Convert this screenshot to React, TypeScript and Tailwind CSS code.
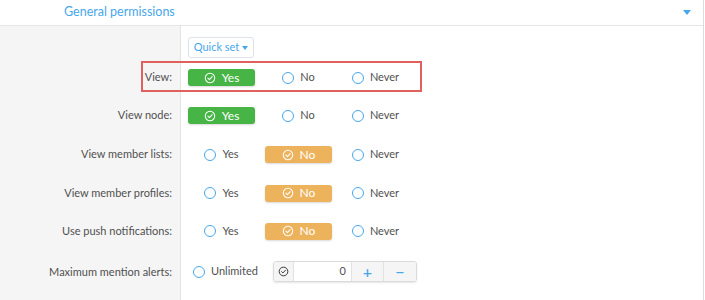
import React from 'react';

type Choice = 'yes' | 'no' | 'never';

interface PermRow {
  label: string;
  value: Choice;
  height: string;
}

const rows: PermRow[] = [
  { label: 'View node:', value: 'yes', height: 'h-[39px]' },
  { label: 'View member lists:', value: 'no', height: 'h-[39px]' },
  { label: 'View member profiles:', value: 'no', height: 'h-[38px]' },
  { label: 'Use push notifications:', value: 'no', height: 'h-[38px]' },
];

const CheckCircle = ({ className = '' }: { className?: string }) => (
  <svg viewBox="0 0 16 16" className={className} fill="none" stroke="currentColor" strokeWidth="1.4">
    <circle cx="8" cy="8" r="6.3" />
    <path d="M5.2 8.2 L7.2 10.1 L10.9 6.1" strokeLinecap="round" strokeLinejoin="round" />
  </svg>
);

const Radio = ({ text }: { text: string }) => (
  <div className="flex items-center gap-[6px] text-[#505050]">
    <span className="w-[12px] h-[12px] rounded-full border-[1.5px] border-[#47a7eb] bg-white" />
    <span>{text}</span>
  </div>
);

const Option = ({ text, active, kind }: { text: string; active: boolean; kind: Choice }) => {
  if (!active) {
    return (
      <div className="w-[67px] flex justify-center">
        <Radio text={text} />
      </div>
    );
  }
  const bg = kind === 'yes' ? 'bg-[#46b546]' : 'bg-[#edb35c]';
  return (
    <div
      className={`w-[67px] h-[17px] rounded-[3px] ${bg} text-white text-[12px] flex items-center justify-center gap-[6px] shadow-[0_1px_2px_rgba(0,0,0,0.15)]`}
    >
      <CheckCircle className="w-[12px] h-[12px]" />
      <span>{text}</span>
    </div>
  );
};

const Choices = ({ value }: { value: Choice }) => (
  <div className="flex items-center gap-[10px] pl-[7px]">
    <Option text="Yes" kind="yes" active={value === 'yes'} />
    <Option text="No" kind="no" active={value === 'no'} />
    <Option text="Never" kind="never" active={value === 'never'} />
  </div>
);

const Label = ({ children }: { children?: React.ReactNode }) => (
  <div className="w-[181px] shrink-0 self-stretch bg-[#f5f5f5] border-r border-[#e4e4e4] flex items-center justify-end pr-[8px] text-[#505050]">
    {children}
  </div>
);

export default function App() {
  return (
    <div
      className="w-[705px] h-[300px] bg-white overflow-hidden text-[11px]"
      style={{ fontFamily: '"Segoe UI", Lato, "Noto Sans", sans-serif' }}
    >
      <div className="w-[704px] h-full border-r border-[#dcdcdc] flex flex-col">
        {/* header */}
        <div className="h-[26px] shrink-0 border-b border-[#e6e6e6] flex items-center justify-between pl-[64px] pr-[12px]">
          <span className="text-[12.5px] text-[#47a7eb]">General permissions</span>
          <span className="w-0 h-0 border-l-[4px] border-r-[4px] border-t-[5px] border-l-transparent border-r-transparent border-t-[#47a7eb]" />
        </div>

        {/* quick set */}
        <div className="flex h-[33px] shrink-0">
          <Label />
          <div className="pl-[7px] pt-[11px]">
            <button className="h-[21px] w-[66px] rounded-[3px] border border-[#dde3ea] bg-white text-[#47a7eb] text-[11px] flex items-center justify-center gap-[3px]">
              Quick set
              <span className="w-0 h-0 border-l-[3px] border-r-[3px] border-t-[4px] border-l-transparent border-r-transparent border-t-[#47a7eb]" />
            </button>
          </div>
        </div>

        {/* view row, highlighted */}
        <div className="relative flex h-[37px] shrink-0 items-center">
          <Label>View:</Label>
          <Choices value="yes" />
          <div className="absolute left-[141px] top-[2px] w-[281px] h-[31px] border-2 border-[#e0605e] pointer-events-none" />
        </div>

        {rows.map((r) => (
          <div key={r.label} className={`flex ${r.height} shrink-0 items-center`}>
            <Label>{r.label}</Label>
            <Choices value={r.value} />
          </div>
        ))}

        {/* max mention alerts */}
        <div className="flex flex-1 items-start">
          <Label>
            <span className="pt-[14px] self-start">Maximum mention alerts:</span>
          </Label>
          <div className="flex items-center pl-[12px] pt-[11px]">
            <div className="w-[79px]">
              <Radio text="Unlimited" />
            </div>
            <div className="ml-[1px] flex h-[21px] rounded-[3px] border border-[#dadada] shadow-[0_1px_2px_rgba(0,0,0,0.1)] overflow-hidden text-[#505050]">
              <div className="w-[20px] bg-[#f5f5f5] border-r border-[#e2e2e2] flex items-center justify-center">
                <CheckCircle className="w-[11px] h-[11px] text-[#333]" />
              </div>
              <div className="w-[57px] bg-white flex items-center justify-end pr-[5px]">0</div>
              <div className="w-[32px] bg-[#f5f5f5] border-l border-[#e2e2e2] flex items-center justify-center text-[#47a7eb] text-[16px] font-semibold">
                +
              </div>
              <div className="w-[33px] bg-[#f5f5f5] border-l border-[#e2e2e2] flex items-center justify-center text-[#47a7eb] text-[16px] font-semibold">
                −
              </div>
            </div>
          </div>
        </div>
      </div>
    </div>
  );
}
